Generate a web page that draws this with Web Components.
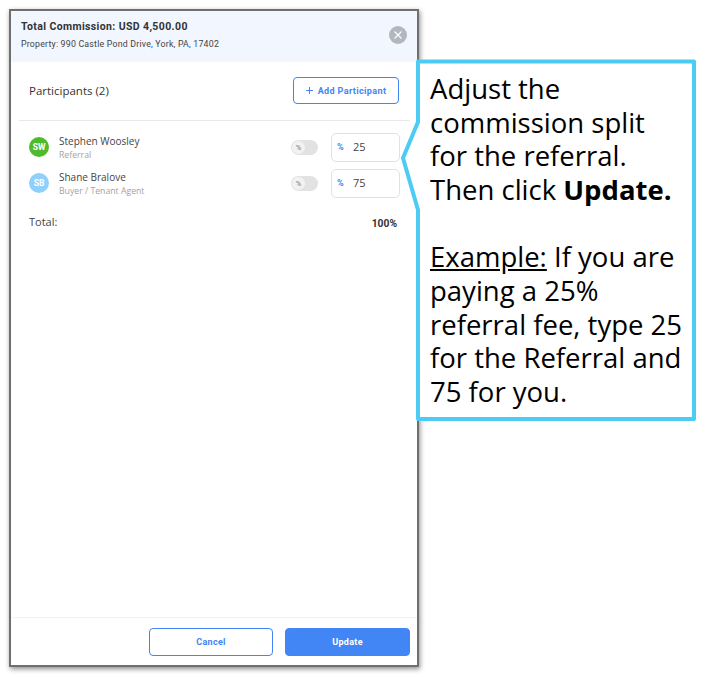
<!DOCTYPE html>
<html lang="en"><head><meta charset="utf-8"><title>Commission split</title>
<style>
html,body{margin:0;background:#fff;}
body{width:709px;height:677px;position:relative;overflow:hidden;font-family:"Roboto","Liberation Sans",sans-serif;}
</style></head><body>
<template id="t-dialog"><style>
:host{display:flex;flex-direction:column;box-sizing:border-box;width:410px;height:658px;margin:9px 0 0 9px;border:2px solid #6f6f6f;background:#fff;box-shadow:1px 2px 5px rgba(0,0,0,.45);}
.main{flex:1;display:flex;flex-direction:column;min-height:0}
</style><slot name="header"></slot><div class="main"><slot></slot></div><slot name="footer"></slot></template>

<template id="t-header"><style>
:host{display:flex;align-items:center;justify-content:space-between;box-sizing:border-box;height:51px;padding:0 10px 4px 10px;background:#f2f6fe;color:#333;}
.t{font:700 10.5px/14px Roboto,sans-serif;letter-spacing:.38px;margin-bottom:4px}
.s{font:400 8.8px/12px Roboto,sans-serif;letter-spacing:.2px;color:#444}
.x{width:18px;height:18px;border-radius:50%;background:#b0b8bf;display:flex;align-items:center;justify-content:center}
</style><div><div class="t"><slot name="title"></slot></div><div class="s"><slot name="sub"></slot></div></div>
<span class="x"><svg width="10" height="10" viewBox="0 0 10 10"><path d="M1.5 1.5l7 7M8.5 1.5l-7 7" stroke="#fff" stroke-width="1.1" fill="none"/></svg></span></template>

<template id="t-bar"><style>
:host{display:flex;align-items:center;justify-content:space-between;height:58px;margin:0 7px 0 8px;padding:0 11px 0 10px;border-bottom:1px solid #e9e9e9;box-sizing:content-box;}
.l{font:400 11.5px/14px "Open Sans",sans-serif;color:#333;margin-top:-1px}
button{box-sizing:border-box;width:106px;height:27px;margin-top:-1px;border:1px solid #4285f4;border-radius:4px;background:#fff;color:#4285f4;font:700 9px/12px Roboto,sans-serif;letter-spacing:.38px;padding:0;display:flex;align-items:center;justify-content:center;gap:5px}
</style><span class="l"><slot name="label"></slot></span><button><svg width="7" height="7" viewBox="0 0 7 7"><path d="M3.5 0v7M0 3.5h7" stroke="#4285f4" stroke-width="1" fill="none"/></svg><slot name="action"></slot></button></template>

<template id="t-row"><style>
:host{display:flex;align-items:center;height:36px;padding:0 17px 0 18px;}
.av{width:20px;height:20px;border-radius:50%;color:#fff;font:700 8.5px/20px Roboto,sans-serif;text-align:center;flex:none;margin-right:10px;margin-top:-1px;background:var(--c)}
.who{flex:1;min-width:0;margin-top:2px}
.n{font:400 10px/14px "Open Sans",sans-serif;color:#444}
.r{font:400 8.7px/13px "Open Sans",sans-serif;color:#a3a3a3;margin-top:1px}
.tg{width:27px;height:15px;border-radius:8px;background:#e2e2e2;position:relative;margin-right:13px;flex:none}
.k{position:absolute;left:1px;top:1px;width:13px;height:13px;border-radius:50%;background:#f2f2f2;color:#999;font:700 7.5px/13px Roboto,sans-serif;text-align:center}
.in{box-sizing:border-box;width:69px;height:29px;border:1px solid #e2e2e2;border-radius:5px;display:flex;align-items:center;flex:none}
.p{font:700 9px/12px Roboto,sans-serif;color:#4285f4;margin-left:5px;width:16px}
.v{font:400 11px/14px "Open Sans",sans-serif;color:#444}
</style><span class="av"><slot name="ini"></slot></span><div class="who"><div class="n"><slot name="name"></slot></div><div class="r"><slot name="role"></slot></div></div><span class="tg"><span class="k">%</span></span><div class="in"><span class="p">%</span><span class="v"><slot name="val"></slot></span></div></template>

<template id="t-total"><style>
:host{display:flex;align-items:center;justify-content:space-between;padding:0 20px 0 18px;margin-top:11px;height:20px}
.a{font:400 11px/14px "Open Sans",sans-serif;color:#444}
.b{font:700 10.3px/14px Roboto,sans-serif;color:#333;margin-top:3px}
</style><span class="a"><slot name="label"></slot></span><span class="b"><slot name="val"></slot></span></template>

<template id="t-footer"><style>
:host{display:flex;justify-content:flex-end;gap:12px;box-sizing:border-box;height:48px;padding:10px 7px 0 0;border-top:1px solid #f3f3f3;margin-top:auto}
button{box-sizing:border-box;width:124px;height:28px;border-radius:4px;border:1px solid #4285f4;font:700 9px/12px Roboto,sans-serif;letter-spacing:.3px;padding:0}
.c{background:#fff;color:#4285f4}.u{background:#4285f4;color:#fff;width:125px}
</style><button class="c"><slot name="cancel"></slot></button><button class="u"><slot name="ok"></slot></button></template>

<template id="t-note"><style>
:host{display:block;position:absolute;left:400px;top:58px;width:297px;height:364px}
svg{position:absolute;inset:0}
.txt{position:absolute;left:30px;top:14px;width:258px;font:400 27.5px/33.65px "Open Sans",sans-serif;color:#000}
</style><svg width="297" height="364" viewBox="0 0 297 364"><path d="M18 3.5H294V361H18V152L3 100L18 64Z" fill="#fff" stroke="#4ccbf5" stroke-width="4" stroke-linejoin="round"/></svg><div class="txt"><slot></slot></div></template>

<commission-dialog>
 <dialog-header slot="header"><span slot="title">Total Commission: USD 4,500.00</span><span slot="sub">Property: 990 Castle Pond Drive, York, PA, 17402</span></dialog-header>
 <participants-bar><span slot="label">Participants (2)</span><span slot="action">Add Participant</span></participants-bar>
 <div style="height:8px"></div>
 <participant-row style="--c:#4fba2c"><span slot="ini">SW</span><span slot="name">Stephen Woosley</span><span slot="role">Referral</span><span slot="val">25</span></participant-row>
 <participant-row style="--c:#90d0fc"><span slot="ini">SB</span><span slot="name">Shane Bralove</span><span slot="role">Buyer / Tenant Agent</span><span slot="val">75</span></participant-row>
 <total-row><span slot="label">Total:</span><span slot="val">100%</span></total-row>
 <dialog-footer slot="footer"><span slot="cancel">Cancel</span><span slot="ok">Update</span></dialog-footer>
</commission-dialog>
<note-callout>Adjust the commission split for the referral.<br>Then click <b>Update.</b><br><br><u>Example:</u> If you are paying a 25% referral fee, type 25 for the Referral and 75 for you.</note-callout>
<script>
for (const [tag,id] of [["commission-dialog","t-dialog"],["dialog-header","t-header"],["participants-bar","t-bar"],["participant-row","t-row"],["total-row","t-total"],["dialog-footer","t-footer"],["note-callout","t-note"]]) {
  customElements.define(tag,class extends HTMLElement{constructor(){super();this.attachShadow({mode:"open"}).appendChild(document.getElementById(id).content.cloneNode(true));}});
}
</script>
</body></html>
